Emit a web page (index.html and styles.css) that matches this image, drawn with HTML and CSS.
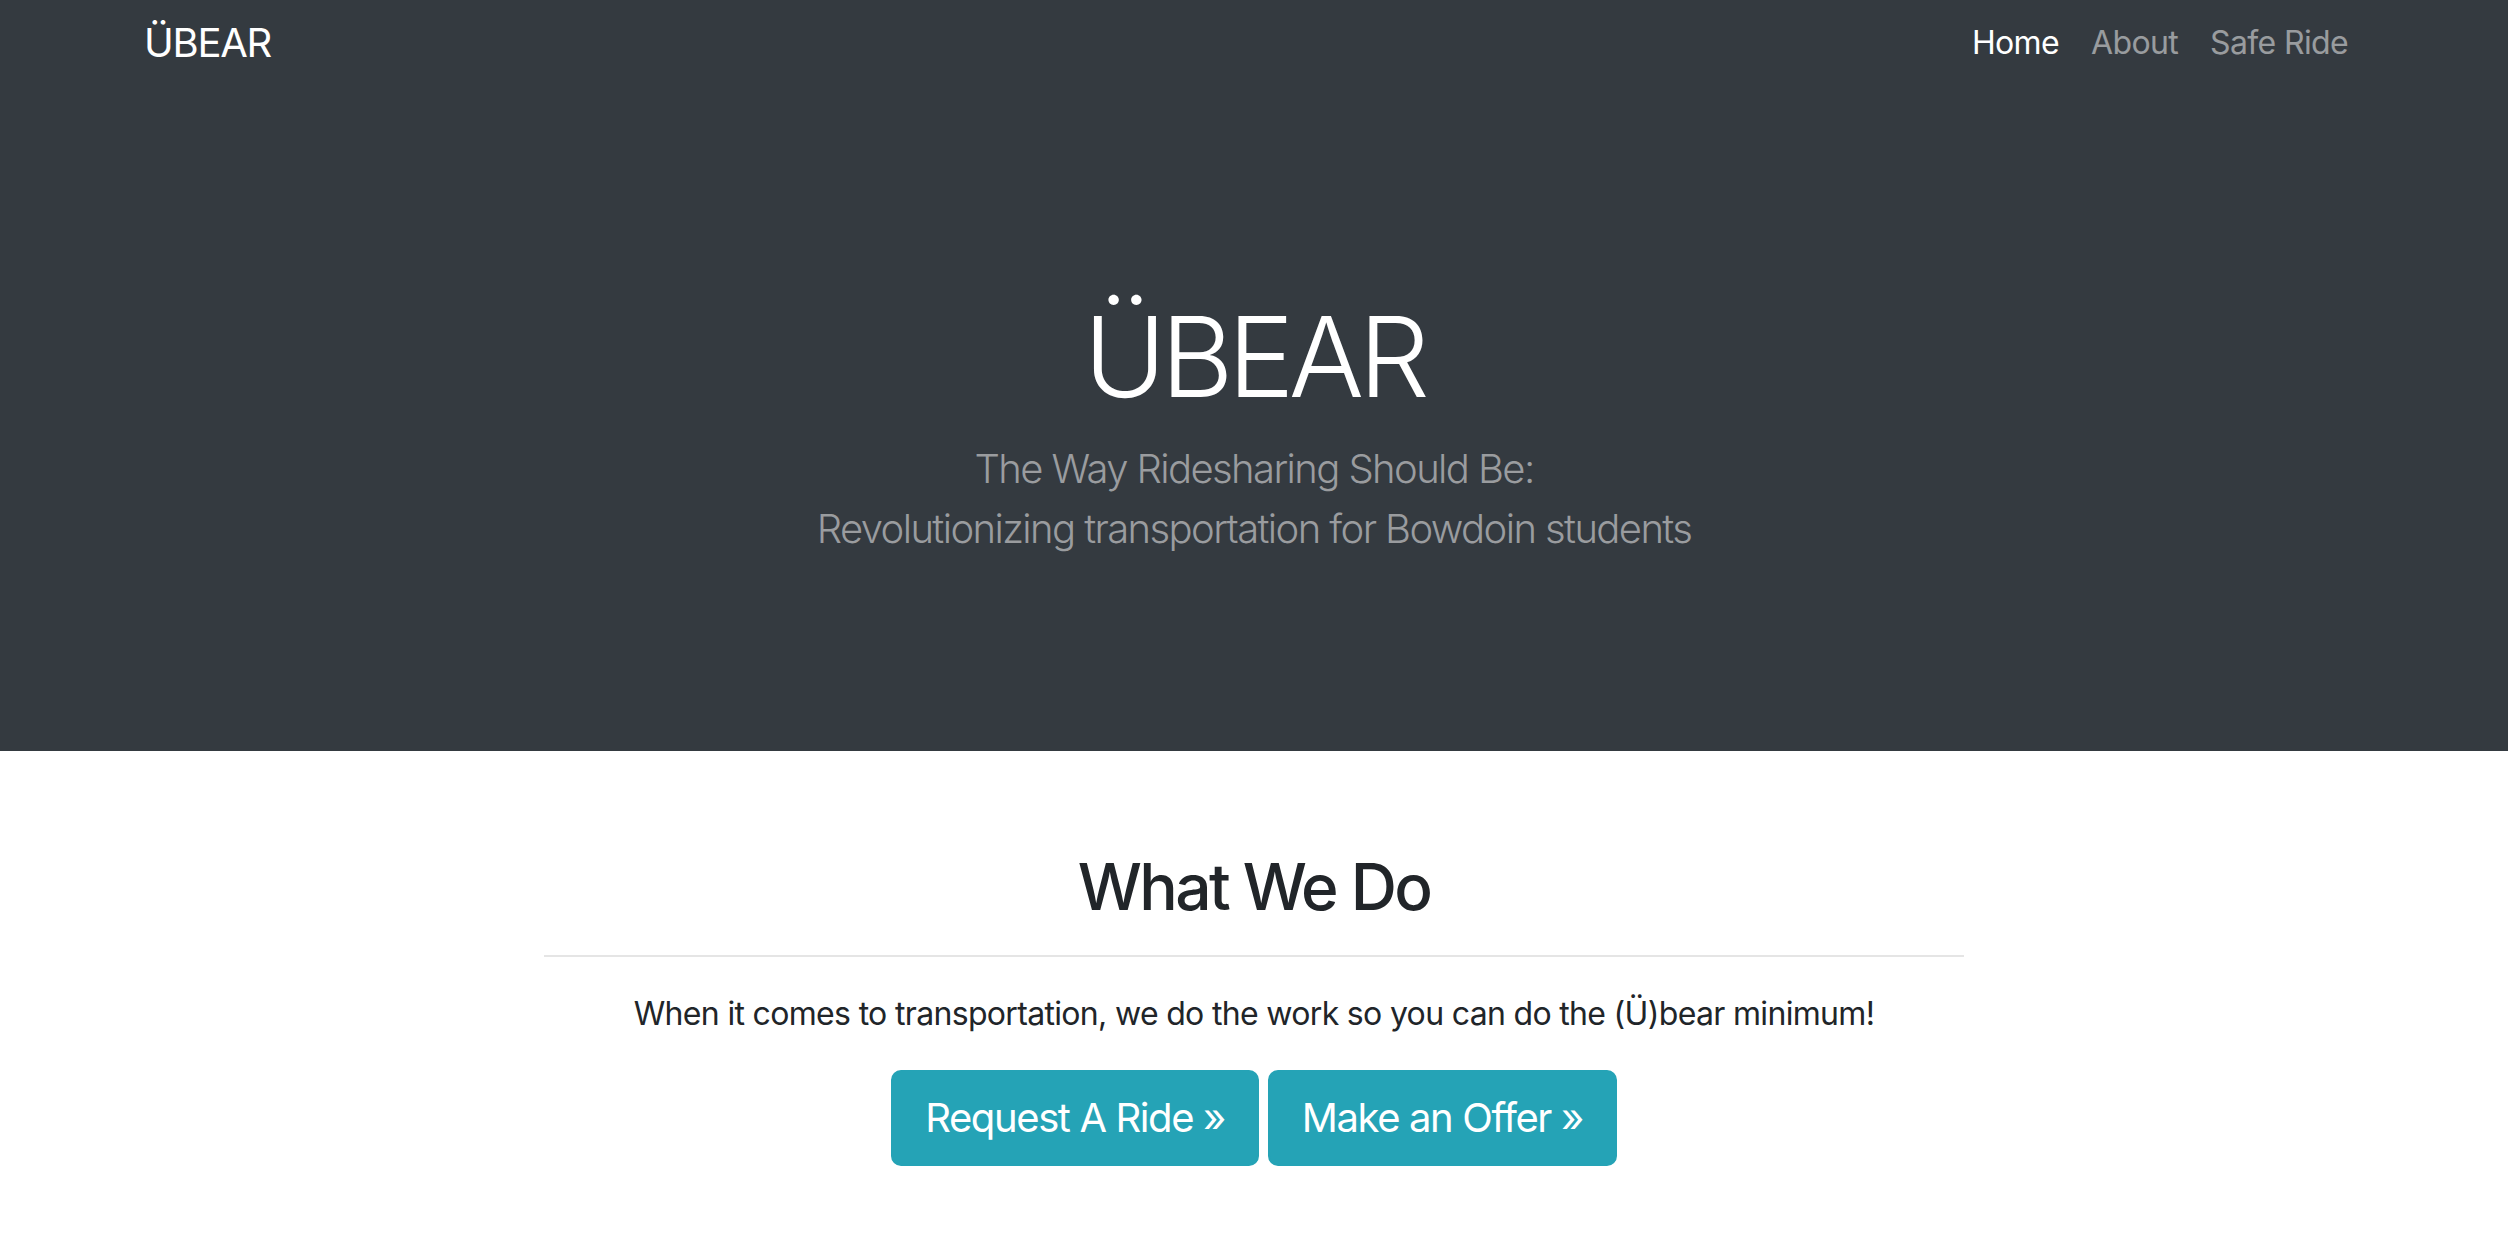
FILE: index.html
```html
<!DOCTYPE html>
<html lang="en">
<head>
<meta charset="utf-8">
<title>ÜBEAR</title>
<link rel="stylesheet" href="styles.css">
</head>
<body>
<header class="navbar">
  <div class="nav-inner">
    <a class="brand" href="#">ÜBEAR</a>
    <nav class="nav-links">
      <a class="nav-link active" href="#">Home</a>
      <a class="nav-link" href="#">About</a>
      <a class="nav-link" href="#">Safe Ride</a>
    </nav>
  </div>
</header>
<section class="hero">
  <h1 class="hero-title">ÜBEAR</h1>
  <p class="hero-lead">The Way Ridesharing Should Be:<br>Revolutionizing transportation for Bowdoin students</p>
</section>
<main class="content">
  <h2 class="section-title">What We Do</h2>
  <hr class="divider">
  <p class="section-text">When it comes to transportation, we do the work so you can do the (Ü)bear minimum!</p>
  <div class="actions">
    <a class="btn" href="#">Request A Ride &raquo;</a>
    <a class="btn" href="#">Make an Offer &raquo;</a>
  </div>
</main>
</body>
</html>
```
FILE: styles.css
```css
* { box-sizing: border-box; }
html, body { margin: 0; padding: 0; }
body {
  font-family: "Inter", "Roboto", sans-serif;
  background: #fff;
  color: #212529;
}
a { text-decoration: none; }

.navbar {
  background: #343a40;
}
.nav-inner {
  margin: 0 144px;
  height: 86px;
  display: flex;
  align-items: center;
  justify-content: space-between;
}
.brand {
  color: #fff;
  font-size: 40px;
  line-height: 60px;
  font-weight: 400;
  letter-spacing: -0.032em;
}
.nav-links {
  display: flex;
}
.nav-link {
  color: rgba(255,255,255,0.5);
  font-size: 32px;
  line-height: 48px;
  padding: 0 16px;
  letter-spacing: -0.02em;
}
.nav-link.active { color: #fff; }

.hero {
  background: #343a40;
  padding: 203px 0 192px;
  text-align: center;
}
.hero-title {
  margin: 0;
  color: #fff;
  font-size: 112px;
  font-weight: 300;
  line-height: 1.2;
  letter-spacing: -0.05em;
}
.hero-lead {
  margin: 16px 0 0;
  color: #9a9c9f;
  font-size: 40px;
  font-weight: 300;
  line-height: 60px;
  letter-spacing: -0.04em;
}

.content {
  padding-top: 98px;
  display: flex;
  flex-direction: column;
  align-items: center;
  text-align: center;
}
.section-title {
  margin: 0;
  font-size: 64px;
  font-weight: 500;
  line-height: 1.2;
  letter-spacing: -0.04em;
}
.divider {
  width: 1420px;
  margin: 29px 0 0;
  border: 0;
  border-top: 2px solid rgba(0,0,0,0.1);
}
.section-text {
  margin: 33px 0 0;
  font-size: 32px;
  line-height: 48px;
  letter-spacing: -0.021em;
}
.actions {
  margin-top: 32px;
  display: flex;
  gap: 9px;
}
.btn {
  display: inline-block;
  background: #25a3b6;
  border: 2px solid #25a3b6;
  color: #fff;
  font-size: 40px;
  line-height: 60px;
  padding: 16px 32px;
  border-radius: 10px;
  letter-spacing: -0.035em;
}
```
